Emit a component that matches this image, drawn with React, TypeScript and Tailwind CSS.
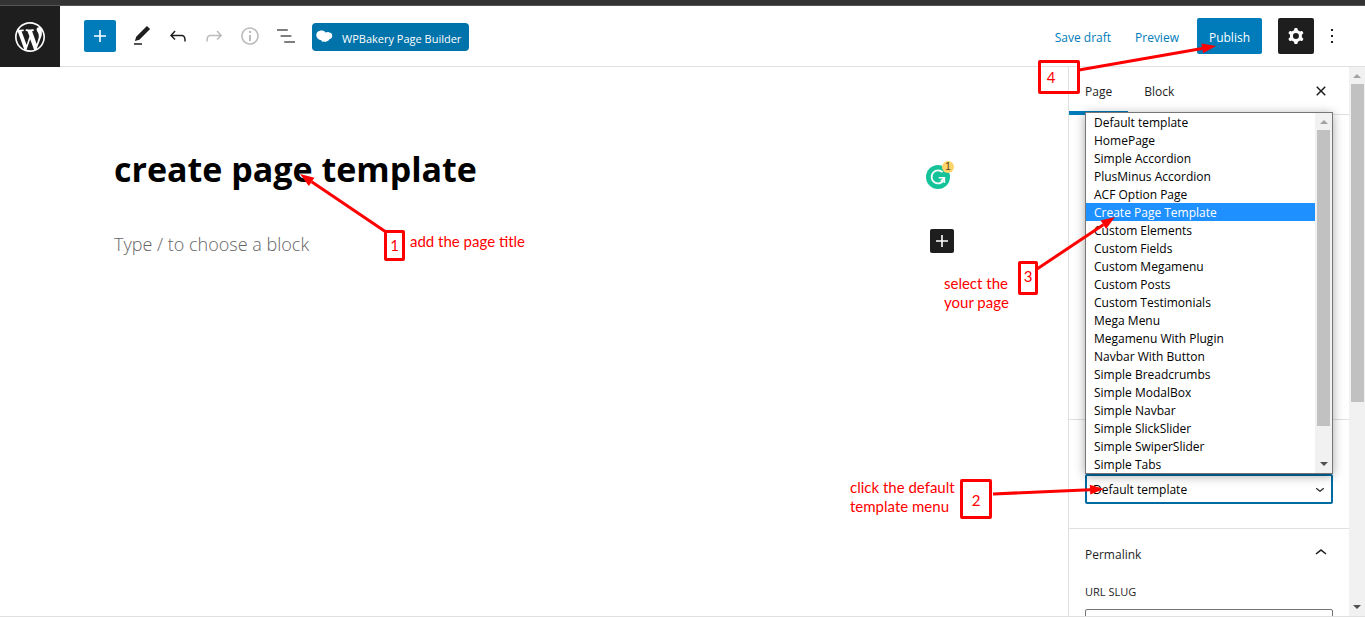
import type { ReactNode } from "react";

const ICONS = {
  wordpress:
    "M20 10c0-5.51-4.49-10-10-10C4.48 0 0 4.49 0 10c0 5.52 4.48 10 10 10 5.51 0 10-4.48 10-10zM7.78 15.37L4.37 6.22c.55-.02 1.17-.08 1.17-.08.5-.06.44-1.13-.06-1.11 0 0-1.45.11-2.37.11-.18 0-.37 0-.58-.01C4.12 2.69 6.87 1.11 10 1.11c2.33 0 4.45.87 6.05 2.34-.68-.11-1.65.39-1.65 1.58 0 .74.45 1.36.9 2.1.35.61.55 1.36.55 2.46 0 1.49-1.4 5-1.4 5l-3.03-8.37c.54-.02.82-.17.82-.17.5-.05.44-1.25-.06-1.22 0 0-1.44.12-2.38.12-.87 0-2.33-.12-2.33-.12-.5-.03-.56 1.2-.06 1.22l.92.08 1.26 3.41zM17.41 10c.24-.64.74-1.87.43-4.25.7 1.29 1.05 2.71 1.05 4.25 0 3.29-1.73 6.24-4.4 7.78.97-2.59 1.94-5.2 2.92-7.78zM6.1 18.09C3.12 16.65 1.11 13.53 1.11 10c0-1.3.23-2.48.72-3.59C3.25 10.3 4.67 14.2 6.1 18.09zm4.03-6.63l2.58 6.98c-.86.29-1.76.45-2.71.45-.79 0-1.57-.11-2.29-.33.81-2.38 1.62-4.74 2.42-7.1z",
  plus: "M18 11.2h-5.2V6h-1.6v5.2H6v1.6h5.2V18h1.6v-5.2H18z",
  edit: "M20.1 5.1L16.9 2 6.2 12.7l-1.3 4.4 4.5-1.3L20.1 5.1zM4 20.8h8v-1.5H4v1.5z",
  undo: "M18.3 11.7c-.6-.6-1.4-.9-2.3-.9H6.7l2.9-3.3-1.1-1-4.5 5L8.5 16l1-1-2.7-2.7H16c.5 0 .9.2 1.3.5 1 1 1 3.4 1 4.5v.3h1.5v-.2c0-1.5 0-4.3-1.5-5.7z",
  redo: "M15.6 6.5l-1.1 1 2.9 3.3H8c-.9 0-1.7.3-2.3.9-1.4 1.5-1.4 4.2-1.4 5.6v.2h1.5v-.3c0-1.1 0-3.5 1-4.5.3-.3.7-.5 1.3-.5h9.2L14.5 15l1.1 1.1 4.6-4.6-4.6-5z",
  info: "M12 3.2c-4.8 0-8.8 3.9-8.8 8.8 0 4.8 3.9 8.8 8.8 8.8 4.8 0 8.8-3.9 8.8-8.8 0-4.8-4-8.8-8.8-8.8zm0 16c-4 0-7.2-3.3-7.2-7.2C4.8 8 8 4.8 12 4.8s7.2 3.3 7.2 7.2c0 4-3.2 7.2-7.2 7.2zM11 17h2v-6h-2v6zm0-8h2V7h-2v2z",
  list: "M13.8 5.2H3v1.5h10.8V5.2zm-3.6 12v1.5H21v-1.5H10.2zm7.2-6H6.6v1.5h10.8v-1.5z",
  cog: "M10.289 4.836A1 1 0 0111.275 4h1.306a1 1 0 01.987.836l.244 1.466c.787.26 1.503.679 2.108 1.218l1.393-.522a1 1 0 011.216.437l.653 1.13a1 1 0 01-.23 1.273l-1.148.944a6.025 6.025 0 010 2.435l1.149.946a1 1 0 01.23 1.272l-.653 1.13a1 1 0 01-1.216.437l-1.394-.522c-.605.54-1.32.958-2.108 1.218l-.244 1.466a1 1 0 01-.987.836h-1.306a1 1 0 01-.986-.836l-.244-1.466a5.995 5.995 0 01-2.108-1.218l-1.394.522a1 1 0 01-1.217-.436l-.653-1.131a1 1 0 01.23-1.272l1.149-.946a6.026 6.026 0 010-2.435l-1.148-.944a1 1 0 01-.23-1.272l.653-1.131a1 1 0 011.217-.437l1.393.522a5.994 5.994 0 012.108-1.218l.244-1.466zM14.929 12a3 3 0 11-6 0 3 3 0 016 0z",
  more: "M13 19h-2v-2h2v2zm0-6h-2v-2h2v2zm0-6h-2V5h2v2z",
  close:
    "M12 13.06l3.712 3.713 1.061-1.06L13.061 12l3.712-3.712-1.06-1.06L12 10.938 8.288 7.227l-1.061 1.06L10.939 12l-3.712 3.712 1.06 1.061L12 13.061z",
  up: "M6.5 12.4L12 8l5.5 4.4-.9 1.2L12 10l-4.5 3.6-1-1.2z",
  down: "M17.5 11.6L12 16l-5.5-4.4.9-1.2L12 14l4.5-3.6 1 1.2z",
};

const TEMPLATES = [
  "Default template",
  "HomePage",
  "Simple Accordion",
  "PlusMinus Accordion",
  "ACF Option Page",
  "Create Page Template",
  "Custom Elements",
  "Custom Fields",
  "Custom Megamenu",
  "Custom Posts",
  "Custom Testimonials",
  "Mega Menu",
  "Megamenu With Plugin",
  "Navbar With Button",
  "Simple Breadcrumbs",
  "Simple ModalBox",
  "Simple Navbar",
  "Simple SlickSlider",
  "Simple SwiperSlider",
  "Simple Tabs",
];

function Icon({ name, className = "size-6", viewBox = "0 0 24 24" }: { name: keyof typeof ICONS; className?: string; viewBox?: string }) {
  return (
    <svg viewBox={viewBox} className={className} fill="currentColor" fillRule="evenodd" aria-hidden="true">
      <path d={ICONS[name]} />
    </svg>
  );
}

function ToolButton({ label, disabled, className = "", children }: { label: string; disabled?: boolean; className?: string; children: ReactNode }) {
  return (
    <button type="button" aria-label={label} disabled={disabled} className={`flex size-9 items-center justify-center disabled:text-[#bbb] ${className}`}>
      {children}
    </button>
  );
}

function Triangle({ up, className }: { up?: boolean; className: string }) {
  return (
    <svg viewBox="0 0 8 4" className={`h-1 w-2 ${className}`} fill="currentColor" aria-hidden="true">
      <path d={up ? "M0 4L4 0l4 4z" : "M0 0l4 4 4-4z"} />
    </svg>
  );
}

function Header() {
  return (
    <header className="flex h-[61px] shrink-0 items-center border-b border-[#e0e0e0]">
      <a href="#pages" aria-label="View pages" className="-mb-px flex h-[61px] w-[60px] items-center justify-center bg-[#1e1e1e] text-white">
        <Icon name="wordpress" viewBox="-2 -2 24 24" className="size-9" />
      </a>
      <div className="flex items-center pl-6">
        <button type="button" aria-label="Add block" className="mr-2 flex size-8 items-center justify-center rounded-xs bg-[#007cba] text-white">
          <Icon name="plus" />
        </button>
        <ToolButton label="Tools"><Icon name="edit" /></ToolButton>
        <ToolButton label="Undo"><Icon name="undo" /></ToolButton>
        <ToolButton label="Redo" disabled><Icon name="redo" /></ToolButton>
        <ToolButton label="Details" disabled><Icon name="info" /></ToolButton>
        <ToolButton label="List view" className="text-[#555]"><Icon name="list" /></ToolButton>
        <button type="button" className="mt-0.5 ml-2 flex h-7 items-center gap-2 rounded-sm bg-[#0073aa] pr-2 pl-1 text-[11px] text-white">
          <svg viewBox="0 0 18 14" className="h-3.5 w-[18px]" fill="currentColor" aria-hidden="true">
            <path d="M5.300 0.500C7.600.2 9 1.300 9.500 2.600c1.600-.9 3.300-.9 4.500.1 1.500.2 2.300 1.500 2.200 3 .1 1.800-1 3-2.700 3.300-.4 1.200-1.300 2-2.500 2.100-.7 1-2 1.100-2.900.5-1.300.4-2.400-.1-2.800-1.400C2.800 9.900.5 8 .3 5.200.2 2.500 2.600.600 5.300.5z" />
          </svg>
          <span className="pt-1">WPBakery Page Builder</span>
        </button>
      </div>
      <div className="ml-auto flex items-center pr-[15px]">
        <button type="button" className="px-3 pt-1 text-[12px] text-[#007cba]">Save draft</button>
        <button type="button" className="mr-1.5 px-3 pt-1 text-[12px] text-[#007cba]">Preview</button>
        <button type="button" className="mr-4 h-9 rounded-xs bg-[#007cba] px-3 pt-1 text-[12px] text-white">Publish</button>
        <button type="button" aria-label="Settings" className="flex size-9 items-center justify-center rounded-xs bg-[#1e1e1e] text-white">
          <Icon name="cog" />
        </button>
        <button type="button" aria-label="Options" className="flex size-9 items-center justify-center">
          <Icon name="more" />
        </button>
      </div>
    </header>
  );
}

function Canvas() {
  return (
    <main className="min-w-0 flex-1">
      <div className="mx-auto flex max-w-[840px] flex-col pt-[75px]">
        <div className="flex items-center justify-between">
          <input
            aria-label="Page title"
            defaultValue="create page template"
            className="h-[54px] min-w-0 flex-1 text-[34px] font-bold text-black outline-none"
          />
          <div className="relative mt-4 mr-1">
            <svg viewBox="0 0 24 24" className="size-6" role="img" aria-label="Grammarly">
              <circle cx="12" cy="12" r="12" fill="#15c39a" />
              <path d="M16.600 7.200A6.500 6.500 0 1 0 17.700 15.200" fill="none" stroke="#fff" strokeWidth="1.800" />
              <path d="M12.800 12.800h5.600v5M18.200 13l-3.400 3.400" fill="none" stroke="#fff" strokeWidth="1.600" />
            </svg>
            <span className="absolute -top-1 -right-1 flex size-3 items-center justify-center rounded-full bg-[#ffd56b] font-['Liberation_Sans',sans-serif] text-[10px] leading-none text-[#5a3d10]">1</span>
          </div>
        </div>
        <div className="mt-[33px] flex items-start">
          <input
            aria-label="Add block text"
            placeholder="Type / to choose a block"
            className="h-[30px] min-w-0 flex-1 text-[18px] font-light outline-none placeholder:text-[#666]"
          />
          <button type="button" aria-label="Add block" className="flex size-6 items-center justify-center rounded-xs bg-[#1e1e1e] text-white">
            <Icon name="plus" />
          </button>
        </div>
      </div>
    </main>
  );
}

function TemplateList() {
  return (
    <div className="absolute inset-x-0 bottom-full z-10 flex border border-[#767676] bg-white shadow-[0_2px_10px_rgba(0,0,0,0.35)]">
      <ul role="listbox" aria-label="Templates" className="flex-1 text-[12px] leading-4 text-black">
        {TEMPLATES.map((name) => (
          <li
            key={name}
            role="option"
            aria-selected={name === "Create Page Template"}
            className="pt-0.5 pl-2 aria-selected:bg-[#1e90ff] aria-selected:text-white"
          >
            {name}
          </li>
        ))}
      </ul>
      <div className="flex w-[17px] flex-col items-center bg-[#f1f1f1]">
        <Triangle up className="mt-[7px] mb-1.5 text-[#a3a3a3]" />
        <div className="mb-auto h-[296px] w-[13px] bg-[#c1c1c1]" />
        <Triangle className="my-[7px] text-[#505050]" />
      </div>
    </div>
  );
}

function Sidebar() {
  return (
    <aside className="flex w-[297px] shrink-0 overflow-hidden border-l border-[#e0e0e0] text-[12px] text-[#1e1e1e]">
      <div className="min-w-0 flex-1">
        <div className="flex h-12 items-stretch border-b border-[#e0e0e0]">
          <button type="button" className="-mb-px border-b-4 border-[#007cba] px-4 pt-1.5">Page</button>
          <button type="button" className="px-4 pt-0.5">Block</button>
          <button type="button" aria-label="Close settings" className="mr-4 ml-auto flex items-center">
            <Icon name="close" />
          </button>
        </div>
        <section aria-label="Status and visibility" className="h-[305px] border-b border-[#e0e0e0]" />
        <section aria-label="Template" className="border-b border-[#e0e0e0] px-4 pt-[54px] pb-6">
          <div className="relative">
            <select
              aria-label="Template"
              defaultValue="Default template"
              className="block h-[30px] w-full appearance-none rounded-xs border-2 border-[#006ba1] bg-white pt-0.5 pl-1.5 text-[12px] text-black outline-none"
            >
              {TEMPLATES.map((name) => (
                <option key={name}>{name}</option>
              ))}
            </select>
            <Icon name="down" className="pointer-events-none absolute top-1.5 right-1 size-[18px]" />
            <TemplateList />
          </div>
        </section>
        <section className="px-4 pt-3">
          <button type="button" aria-expanded="true" className="flex w-full items-center justify-between font-medium">
            <span className="pt-1">Permalink</span>
            <Icon name="up" />
          </button>
          <label htmlFor="slug" className="mt-[19px] block text-[11px] leading-4">URL SLUG</label>
          <input id="slug" className="mt-[9px] h-[30px] w-full rounded-xs border border-[#757575] px-2 outline-none" />
        </section>
      </div>
      <div className="flex w-4 flex-col items-center bg-[#f1f1f1]">
        <Triangle up className="mt-[7px] mb-1.5 text-[#a3a3a3]" />
        <div className="mb-auto h-[318px] w-[13px] bg-[#c1c1c1]" />
        <Triangle className="mb-[7px] text-[#505050]" />
      </div>
    </aside>
  );
}

function Step({ n, className }: { n: number; className: string }) {
  return <div className={`absolute flex items-center justify-center rounded-xs border-3 border-[#f00] ${className}`}>{n}</div>;
}

function Arrow({ from, to }: { from: [number, number]; to: [number, number] }) {
  const angle = Math.atan2(to[1] - from[1], to[0] - from[0]);
  const dx = Math.cos(angle);
  const dy = Math.sin(angle);
  const bx = to[0] - dx * 14;
  const by = to[1] - dy * 14;
  return (
    <g>
      <path d={`M${from[0]} ${from[1]}L${bx} ${by}`} stroke="#f00" strokeWidth="3" />
      <path d={`M${to[0]} ${to[1]}L${bx - dy * 5} ${by + dx * 5}L${bx + dy * 5} ${by - dx * 5}z`} fill="#f00" />
    </g>
  );
}

function Notes() {
  return (
    <div className="pointer-events-none absolute inset-0 z-20 overflow-hidden font-['Lato',sans-serif] text-[15px] leading-[19px] text-[#f00]">
      <svg className="absolute top-0 left-0 h-[320px] w-[560px]" viewBox="0 0 560 320" aria-hidden="true">
        <Arrow from={[386, 232]} to={[300, 174]} />
      </svg>
      <Step n={1} className="top-[230px] left-[384px] h-[31px] w-[21px]" />
      <p className="absolute top-[232px] left-[410px]">add the page title</p>

      <div className="absolute top-0 right-0 h-[617px] w-[565px]">
        <svg className="absolute inset-0 size-full" viewBox="800 0 565 617" aria-hidden="true">
          <Arrow from={[993, 494]} to={[1104, 489]} />
          <Arrow from={[1037, 269]} to={[1115, 217]} />
          <Arrow from={[1079, 70]} to={[1216, 46]} />
        </svg>
        <p className="absolute top-[478px] left-[50px]">click the default<br />template menu</p>
        <Step n={2} className="top-[479px] left-[160px] h-10 w-8 pt-0.5" />
        <p className="absolute top-[274px] left-[144px]">select the<br />your page</p>
        <Step n={3} className="top-[261px] left-[218px] h-[34px] w-5 pb-1" />
        <Step n={4} className="top-[60px] left-[238px] h-[34px] w-[42px] pr-4" />
      </div>
    </div>
  );
}

export default function App() {
  return (
    <div className="relative flex h-screen flex-col overflow-hidden border-b border-[#e0e0e0] bg-white font-['Open_Sans','Noto_Sans',sans-serif] text-[#1e1e1e]">
      <div className="h-1.5 shrink-0 border-b border-[#555] bg-[#333]" />
      <Header />
      <div className="flex min-h-0 flex-1">
        <Canvas />
        <Sidebar />
      </div>
      <Notes />
    </div>
  );
}
